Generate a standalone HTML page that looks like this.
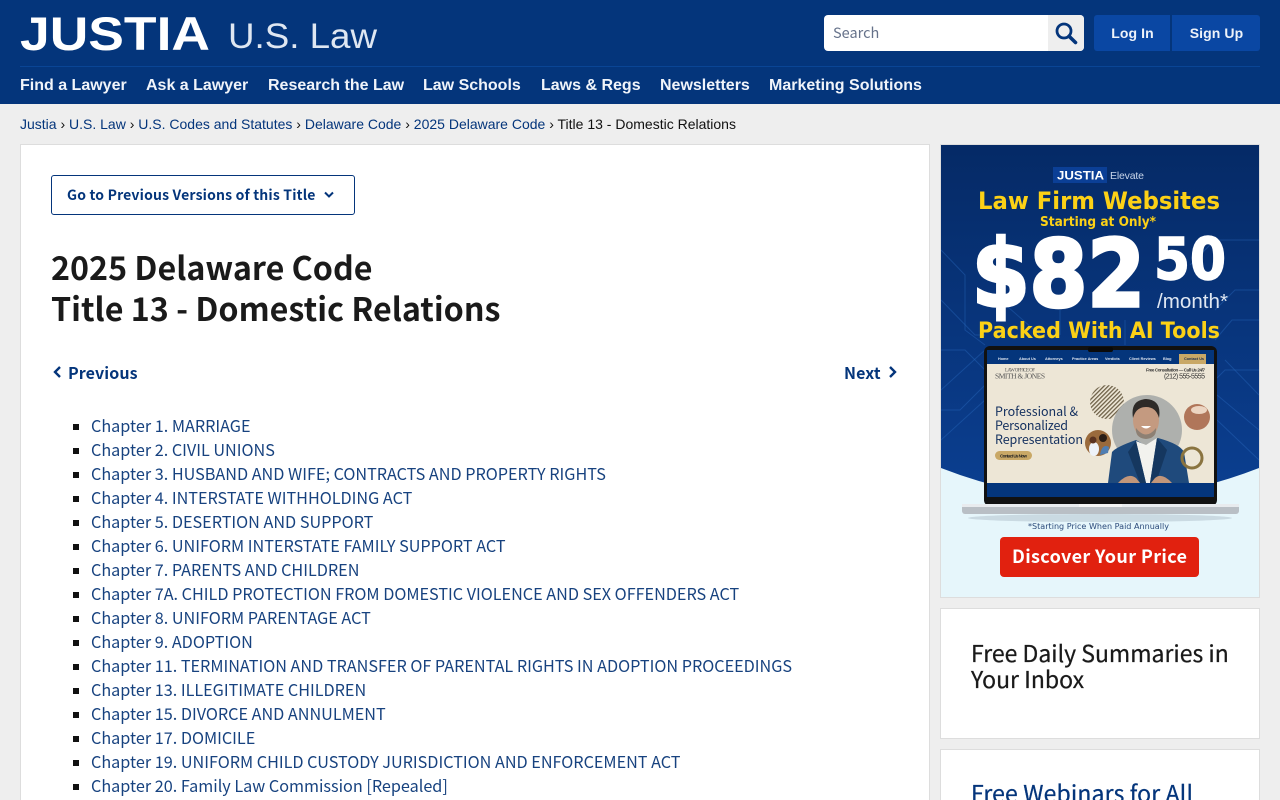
<!DOCTYPE html>
<html lang="en"><head><meta charset="utf-8"><title>2025 Delaware Code Title 13 - Domestic Relations</title>
<style>
html,body{margin:0;padding:0;width:1280px;height:800px;overflow:hidden;background:#eee}
body{position:relative;font-family:"Liberation Sans",sans-serif}
a{color:inherit;text-decoration:none}
.abs{position:absolute;white-space:nowrap}
header{position:absolute;left:0;top:0;width:1280px;height:104px;background:#04357b}
.sep{position:absolute;left:20px;top:66px;width:1240px;height:1px;background:#0a4595}
nav a{position:absolute;top:77px;line-height:18px;font-size:16px;font-weight:700;color:#f0f4fa;white-space:nowrap}
.search{position:absolute;left:824px;top:15px;width:260px;height:36px;background:#fff;border-radius:4px;overflow:hidden}
.search span{position:absolute;left:9px;top:0;font:14.5px/36px "Noto Sans CJK JP",sans-serif;color:#66728a}
.search i{position:absolute;right:0;top:0;width:36px;height:36px;background:#eee}
.btn{position:absolute;top:15px;height:36px;line-height:36px;background:#0a47a3;color:#eef3fa;font-size:14px;font-weight:700;text-align:center;letter-spacing:.1px;text-indent:1px}
.crumb{position:absolute;left:20px;top:116px;font-size:14px;line-height:16px;color:#111;white-space:nowrap}
.crumb a{color:#04357b}
.card{position:absolute;background:#fff;border:1px solid #ddd;box-sizing:border-box;overflow:hidden}
.ns{font-family:"Noto Sans CJK JP","Liberation Sans",sans-serif}
.ver{position:absolute;left:30px;top:30px;width:304px;height:40px;box-sizing:border-box;border:1px solid #04357b;border-radius:3px;color:#04357b;font-weight:700;font-size:14px;line-height:39px;padding-left:15px;letter-spacing:.17px;white-space:nowrap}
h1{position:absolute;left:30px;top:102px;margin:0;font-size:32.25px;line-height:41px;font-weight:700;color:#1a1a1a;white-space:nowrap}
.pn{position:absolute;top:216px;font-size:16px;line-height:22px;font-weight:700;color:#04357b;letter-spacing:.1px}
ul{position:absolute;left:70px;top:268px;margin:0;padding:0;list-style:none;font-size:16.2px;line-height:24px;color:#17427f}
li{height:24px;white-space:nowrap;position:relative}
li:before{content:"";position:absolute;left:-18px;top:11px;width:6px;height:6px;background:#111}
.side{font-size:23px;line-height:26px;-webkit-text-stroke:.25px currentColor;white-space:nowrap;position:absolute;left:30px}
</style></head><body>
<header>
<svg class="abs" style="left:0;top:0" width="400" height="60">
<text x="20" y="50" font-family="Liberation Sans" font-weight="700" font-size="47" fill="#fff" textLength="190" lengthAdjust="spacingAndGlyphs">JUSTIA</text>
<text x="228" y="48" font-family="Liberation Sans" font-size="35" fill="#dfe7f2" textLength="149" lengthAdjust="spacingAndGlyphs">U.S. Law</text>
</svg>
<div class="search"><span>Search</span><i></i>
<svg class="abs" style="left:230px;top:6px" width="24" height="24" viewBox="0 0 24 24" fill="none" stroke="#04357b"><circle cx="10" cy="10" r="7" stroke-width="2.800"/><path d="M15 15.200L21.500 21.500" stroke-width="3.600" stroke-linecap="round"/></svg></div>
<a class="btn" style="left:1094px;width:76px;border-radius:3px 0 0 3px">Log In</a>
<a class="btn" style="left:1172px;width:88px;border-radius:0 3px 3px 0">Sign Up</a>
<div class="sep"></div>
<nav>
<a style="left:20px">Find a Lawyer</a><a style="left:146px">Ask a Lawyer</a><a style="left:268px">Research the Law</a><a style="left:423px">Law Schools</a><a style="left:541px">Laws &amp; Regs</a><a style="left:660px">Newsletters</a><a style="left:769px">Marketing Solutions</a>
</nav>
</header>
<div class="crumb"><a>Justia</a> › <a>U.S. Law</a> › <a>U.S. Codes and Statutes</a> › <a>Delaware Code</a> › <a>2025 Delaware Code</a> › Title 13 - Domestic Relations</div>

<main class="card ns" style="left:20px;top:144px;width:910px;height:656px;border-bottom:0">
<a class="ver">Go to Previous Versions of this Title<svg class="abs" style="left:272px;top:15px" width="10" height="8" viewBox="0 0 10 8" fill="none" stroke="#04357b" stroke-width="2"><path d="M1 1.500L5 5.500L9 1.500"/></svg></a>
<h1>2025 Delaware Code<br>Title 13 - Domestic Relations</h1>
<a class="pn" style="left:47px">Previous</a>
<svg class="abs" style="left:31px;top:220px" width="10" height="14" viewBox="0 0 10 14" fill="none" stroke="#04357b" stroke-width="2.400"><path d="M8 2L3 7L8 12"/></svg>
<a class="pn" style="left:823px">Next</a>
<svg class="abs" style="left:867px;top:220px" width="10" height="14" viewBox="0 0 10 14" fill="none" stroke="#04357b" stroke-width="2.400"><path d="M2 2L7 7L2 12"/></svg>
<ul>
<li><a>Chapter 1. MARRIAGE</a></li>
<li><a>Chapter 2. CIVIL UNIONS</a></li>
<li><a>Chapter 3. HUSBAND AND WIFE; CONTRACTS AND PROPERTY RIGHTS</a></li>
<li><a>Chapter 4. INTERSTATE WITHHOLDING ACT</a></li>
<li><a>Chapter 5. DESERTION AND SUPPORT</a></li>
<li><a>Chapter 6. UNIFORM INTERSTATE FAMILY SUPPORT ACT</a></li>
<li><a>Chapter 7. PARENTS AND CHILDREN</a></li>
<li><a>Chapter 7A. CHILD PROTECTION FROM DOMESTIC VIOLENCE AND SEX OFFENDERS ACT</a></li>
<li><a>Chapter 8. UNIFORM PARENTAGE ACT</a></li>
<li><a>Chapter 9. ADOPTION</a></li>
<li><a>Chapter 11. TERMINATION AND TRANSFER OF PARENTAL RIGHTS IN ADOPTION PROCEEDINGS</a></li>
<li><a>Chapter 13. ILLEGITIMATE CHILDREN</a></li>
<li><a>Chapter 15. DIVORCE AND ANNULMENT</a></li>
<li><a>Chapter 17. DOMICILE</a></li>
<li><a>Chapter 19. UNIFORM CHILD CUSTODY JURISDICTION AND ENFORCEMENT ACT</a></li>
<li><a>Chapter 20. Family Law Commission [Repealed]</a></li>
</ul>
</main>

<div class="card" style="left:940px;top:144px;width:320px;height:454px">
<svg class="abs" style="left:0;top:0" width="318" height="452" viewBox="941 145 318 452" font-family="Liberation Sans">
<defs><linearGradient id="g" x1="0" y1="0" x2="0" y2="1"><stop offset="0" stop-color="#052a66"/><stop offset="1" stop-color="#0b3f91"/></linearGradient>
<pattern id="st" width="3" height="3" patternUnits="userSpaceOnUse" patternTransform="rotate(-45)"><rect width="3" height="3" fill="#efe8d8"/><rect width="3" height="1.300" fill="#6e6148"/></pattern></defs>
<rect x="941" y="145" width="318" height="452" fill="#e6f6fb"/>
<path d="M941 145H1259V468Q1100 530 941 468Z" fill="url(#g)"/>
<g fill="none" stroke="#2a6cc0" stroke-opacity=".4" stroke-width="1">
<path d="M941 250L965 275V330L985 345"/><path d="M941 300L975 335H985"/><path d="M941 350H965L985 370"/><path d="M941 390L985 350"/><path d="M941 410H960L985 385"/><path d="M941 440L985 400"/>
<path d="M1259 240H1215L1190 265"/><path d="M1259 290H1235L1215 310"/><path d="M1259 320H1232L1215 340"/><path d="M1259 370H1225L1217 378"/><path d="M1259 395L1225 360"/><path d="M1259 430L1217 395"/><path d="M1259 460L1217 420"/>
<path d="M1060 310V335"/><path d="M1125 320V345"/><path d="M1000 300L1040 335"/>
</g>
<rect x="1053" y="167" width="54" height="16" fill="#0b3f96"/>
<text x="1057" y="179.500" font-family="Liberation Sans" font-size="12" font-weight="700" fill="#fff" textLength="47" lengthAdjust="spacingAndGlyphs">JUSTIA</text>
<text x="1110" y="179" font-size="10.500" fill="#c9d6ea" textLength="34">Elevate</text>
<g font-family="DejaVu Sans" font-weight="700" fill="#fcd116">
<text x="978" y="209" font-size="24" textLength="242" lengthAdjust="spacingAndGlyphs">Law Firm Websites</text>
<text x="1040" y="226" font-size="13.500" textLength="116" lengthAdjust="spacingAndGlyphs">Starting at Only*</text>
<text x="978" y="338" font-size="22" textLength="242" lengthAdjust="spacingAndGlyphs">Packed With AI Tools</text>
</g>
<g font-family="DejaVu Sans" font-weight="700" fill="#fff" stroke="#fff">
<text x="972" y="306" font-size="93" stroke-width="3.500" textLength="173" lengthAdjust="spacingAndGlyphs">$82</text>
<text x="1154" y="279" font-size="58" stroke-width="1.500" textLength="72" lengthAdjust="spacingAndGlyphs">50</text>
</g>
<text x="1157" y="308" font-size="20" fill="#dfe7f2" textLength="71" lengthAdjust="spacingAndGlyphs">/month*</text>
<!-- laptop -->
<ellipse cx="1100" cy="518" rx="132" ry="4" fill="#9fb1bd" opacity=".4"/>
<rect x="984" y="346" width="233" height="160" rx="6" fill="#111"/>
<rect x="987" y="350" width="227" height="14" fill="#04357b"/>
<rect x="1088" y="347" width="25" height="5" rx="2" fill="#0a0a0a"/>
<rect x="987" y="364" width="227" height="119" fill="#ede6d6"/>
<rect x="987" y="483" width="227" height="14" fill="#04357b"/>
<rect x="1179" y="354" width="27" height="10" fill="#c9a866"/>
<g font-size="3.800" fill="#dfe6f0" font-weight="700"><text x="998" y="360">Home</text><text x="1019" y="360">About Us</text><text x="1045" y="360">Attorneys</text><text x="1072" y="360">Practice Areas</text><text x="1105" y="360">Verdicts</text><text x="1129" y="360">Client Reviews</text><text x="1163" y="360">Blog</text><text x="1184" y="360" fill="#22304a">Contact Us</text></g>
<text x="1005" y="371.500" font-family="Liberation Serif" font-size="5" fill="#555" textLength="30">LAW OFFICE OF</text>
<text x="995" y="378.500" font-family="Liberation Serif" font-size="7.500" fill="#555" textLength="50">SMITH &amp; JONES</text>
<text x="1146" y="371.500" font-size="4.500" font-weight="700" fill="#333" textLength="59">Free Consultation — Call Us 24/7</text>
<text x="1164" y="378.500" font-size="7" fill="#333" textLength="41">(212) 555-5555</text>
<g font-family="Noto Sans CJK JP" font-size="12.500" fill="#14305f">
<text x="995" y="416" textLength="83">Professional &amp;</text><text x="995" y="430" textLength="73">Personalized</text><text x="995" y="444" textLength="88">Representation</text></g>
<rect x="995" y="451" width="37" height="9" rx="4.500" fill="#c9a866"/>
<text x="1000" y="457.500" font-size="4.500" font-weight="700" fill="#222" textLength="27">Contact Us Now</text>
<circle cx="1107" cy="402" r="17" fill="url(#st)"/>
<circle cx="1147" cy="430" r="35" fill="#aeb0ad"/>
<path d="M1108 483L1112 452Q1116 447 1136 440L1146 446L1158 438Q1180 444 1184 452L1189 483Z" fill="#1f4a7c"/>
<path d="M1136 441L1146 445L1157 438L1150 483H1146Z" fill="#f2f2ee"/>
<path d="M1136 441L1146 483H1140L1128 452ZM1157 438L1150 483H1156L1167 450Z" fill="#15375f"/>
<path d="M1118 483Q1128 472 1136 478L1140 483ZM1172 483Q1162 472 1155 478L1151 483Z" fill="#c2967a"/>
<ellipse cx="1146" cy="420" rx="13" ry="18" fill="#c49a80"/>
<path d="M1133 418Q1130 400 1146 399Q1162 400 1159 418Q1156 407 1146 407Q1136 407 1133 418Z" fill="#2d2a28"/>
<path d="M1136 428Q1146 441 1156 428Q1157 438 1146 439Q1135 438 1136 428Z" fill="#8d8074"/>
<path d="M1141 426Q1146 431 1151 426Z" fill="#fff"/>
<circle cx="1197" cy="417" r="13" fill="#b0765a"/><ellipse cx="1199" cy="410" rx="8" ry="4" fill="#ecd5c2"/>
<circle cx="1098" cy="443" r="13" fill="#9a6a3c"/><ellipse cx="1094" cy="449" rx="5" ry="7" fill="#eef2f8"/><path d="M1100 455Q1102 443 1109 447L1108 453Z" fill="#4f7eb3"/><circle cx="1103" cy="438" r="4" fill="#2a1d16"/><circle cx="1093" cy="440" r="3.500" fill="#5a3320"/>
<circle cx="1192" cy="458" r="10" fill="none" stroke="#8a7440" stroke-width="3"/>
<rect x="962" y="504" width="277" height="10" rx="3" fill="#b9bfc5"/>
<rect x="962" y="504" width="277" height="3" fill="#e8ebee"/>
<rect x="1079" y="504" width="43" height="3" fill="#f4f4f4"/>
<text x="1028" y="529" font-family="DejaVu Sans" font-size="8" fill="#2b4a7a" textLength="141" lengthAdjust="spacingAndGlyphs">*Starting Price When Paid Annually</text>
<rect x="1000" y="537" width="199" height="40" rx="4" fill="#e1210f"/>
<text x="1012" y="563" font-family="Noto Sans CJK JP" font-weight="700" font-size="18" fill="#fff" textLength="175">Discover Your Price</text>
</svg>
</div>

<div class="card ns" style="left:940px;top:608px;width:320px;height:131px;color:#1a1a1a">
<div class="side" style="top:30px">Free Daily Summaries in<br>Your Inbox</div>
</div>
<div class="card ns" style="left:940px;top:749px;width:320px;height:51px;border-bottom:0;color:#04357b">
<div class="side" style="top:29px;letter-spacing:.15px">Free Webinars for All</div>
</div>
</body></html>
